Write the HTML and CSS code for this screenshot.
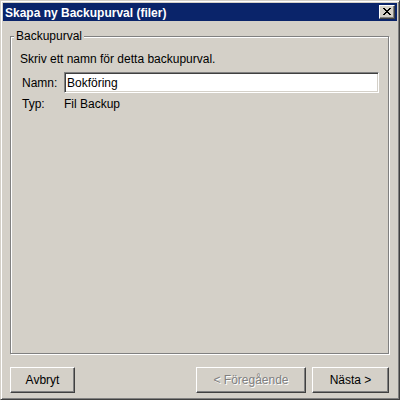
FILE: index.html
```html
<!DOCTYPE html>
<html lang="sv">
<head>
<meta charset="utf-8">
<title>Skapa ny Backupurval (filer)</title>
<link rel="stylesheet" href="styles.css">
</head>
<body>
<div class="window">
  <div class="titlebar">
    <span class="title">Skapa ny Backupurval (filer)</span>
    <button class="close" type="button" aria-label="Stäng">
      <svg width="8" height="7" viewBox="0 0 8 7" shape-rendering="crispEdges">
        <path fill="#000" d="M0 0h2v1h-2z M6 0h2v1h-2z M1 1h2v1h-2z M5 1h2v1h-2z M2 2h4v1h-4z M3 3h2v1h-2z M2 4h4v1h-4z M1 5h2v1h-2z M5 5h2v1h-2z M0 6h2v1h-2z M6 6h2v1h-2z"/>
      </svg>
    </button>
  </div>
  <div class="content">
    <div class="group">
      <span class="group-title">Backupurval</span>
      <p class="intro">Skriv ett namn för detta backupurval.</p>
      <div class="fields">
        <span class="label">Namn:</span>
        <input class="textbox" type="text" value="Bokföring">
        <span class="label">Typ:</span>
        <span class="value">Fil Backup</span>
      </div>
    </div>
    <div class="buttons">
      <button class="btn btn-cancel" type="button">Avbryt</button>
      <span class="spacer"></span>
      <button class="btn btn-prev" type="button" disabled>&lt; Föregående</button>
      <button class="btn btn-next" type="button">Nästa &gt;</button>
    </div>
  </div>
</div>
</body>
</html>
```

FILE: styles.css
```css
html, body {
  margin: 0;
  padding: 0;
  background: #d4d0c8;
}

body {
  font-family: "Liberation Sans", Arial, sans-serif;
  font-size: 12px;
  line-height: 14px;
  color: #000;
}

.window {
  box-sizing: border-box;
  width: 400px;
  height: 400px;
  background: #d4d0c8;
  border-top: 1px solid #d4d0c8;
  border-left: 1px solid #d4d0c8;
  border-right: 1px solid #404040;
  border-bottom: 1px solid #404040;
  box-shadow: inset 1px 1px 0 #ffffff, inset -1px -1px 0 #808080;
  padding: 2px;
  display: flex;
  flex-direction: column;
}

.titlebar {
  height: 18px;
  background: #0a246a;
  color: #fff;
  display: flex;
  align-items: center;
  padding: 0 2px 0 2px;
  flex: none;
}

.title {
  font-weight: bold;
  padding-top: 2px;
  flex: 1;
  white-space: nowrap;
}

.close {
  box-sizing: border-box;
  width: 16px;
  height: 14px;
  margin: 0;
  padding: 0;
  background: #d4d0c8;
  border-top: 1px solid #fff;
  border-left: 1px solid #fff;
  border-right: 1px solid #404040;
  border-bottom: 1px solid #404040;
  box-shadow: inset -1px -1px 0 #808080;
  display: flex;
  align-items: center;
  justify-content: center;
}

.close svg {
  display: block;
  margin: 0 1px 1px 0;
}

.content {
  flex: 1;
  display: flex;
  flex-direction: column;
  padding: 15px 8px 4px 7px;
  gap: 13px;
}

.group {
  position: relative;
  flex: 1;
  border: 1px solid #808080;
  box-shadow: inset 1px 1px 0 #fff, 1px 1px 0 #fff;
  padding: 15px 10px 0 9px;
}

.group-title {
  position: absolute;
  top: -8px;
  left: 3px;
  padding: 0 2px;
  background: #d4d0c8;
}

.intro {
  margin: 0;
}

.fields {
  margin: 6px 0 0 2px;
  display: grid;
  grid-template-columns: 42px 1fr;
  row-gap: 4px;
  align-items: center;
}

.textbox {
  box-sizing: border-box;
  width: 315px;
  height: 21px;
  margin: 0;
  padding: 0 2px;
  font: inherit;
  color: #000;
  background: #fff;
  border-top: 1px solid #808080;
  border-left: 1px solid #808080;
  border-right: 1px solid #fff;
  border-bottom: 1px solid #fff;
  box-shadow: inset 1px 1px 0 #404040, inset -1px -1px 0 #d4d0c8;
  outline: none;
}

.buttons {
  display: flex;
  gap: 6px;
  flex: none;
}

.spacer {
  flex: 1;
}

.btn {
  box-sizing: border-box;
  height: 26px;
  margin: 0;
  padding: 0;
  font: inherit;
  color: #000;
  background: #d4d0c8;
  border-top: 1px solid #fff;
  border-left: 1px solid #fff;
  border-right: 1px solid #404040;
  border-bottom: 1px solid #404040;
  box-shadow: inset -1px -1px 0 #808080;
}

.btn-cancel { width: 65px; }
.btn-prev { width: 110px; }
.btn-next { width: 77px; }

.btn:disabled {
  color: #808080;
  text-shadow: 1px 1px 0 #fff;
}
```
